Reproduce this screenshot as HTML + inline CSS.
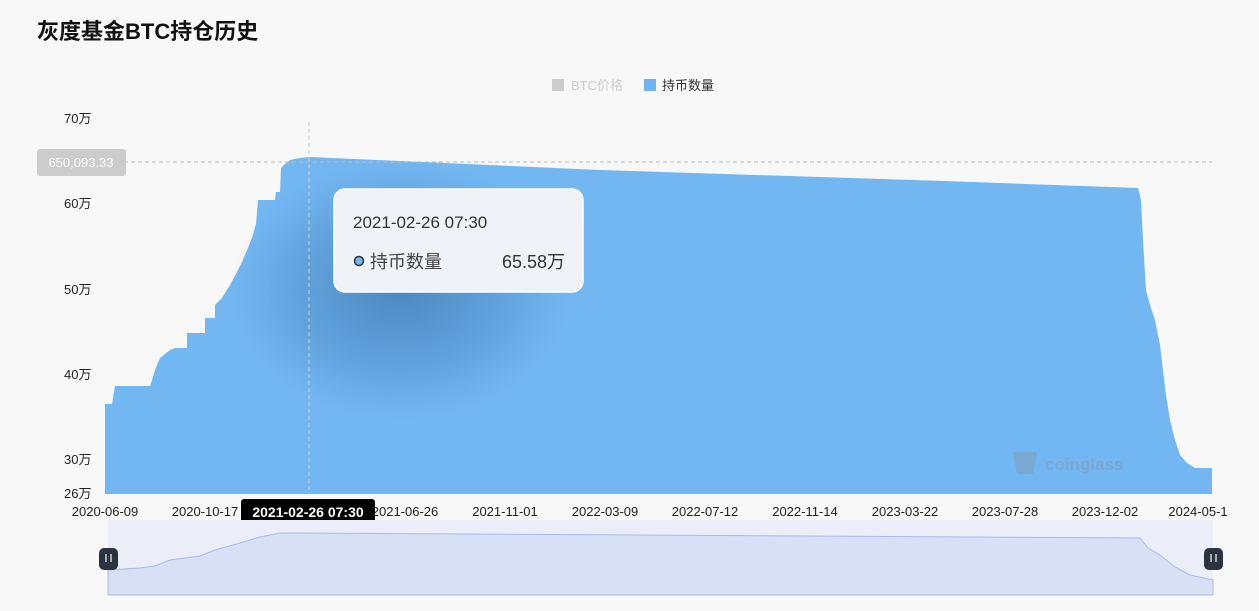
<!DOCTYPE html>
<html><head><meta charset="utf-8"><style>
html,body{margin:0;padding:0;width:1259px;height:611px;background:#f8f8f8;overflow:hidden;font-family:"Liberation Sans","Noto Sans CJK SC",sans-serif;}
</style></head><body>
<svg width="1259" height="611" xmlns="http://www.w3.org/2000/svg" style="position:absolute;left:0;top:0">
<defs>
<radialGradient id="sh" cx="0.5" cy="0.5" r="0.5">
<stop offset="0" stop-color="#1d4f86" stop-opacity="0.45"/>
<stop offset="0.6" stop-color="#1d4f86" stop-opacity="0.2"/>
<stop offset="1" stop-color="#1d4f86" stop-opacity="0"/>
</radialGradient>
</defs>
<text x="37" y="39" font-size="22" font-weight="bold" fill="#111" font-family="Liberation Sans,Noto Sans CJK SC,sans-serif">灰度基金BTC持仓历史</text>
<rect x="552" y="79" width="12" height="12" fill="#ccc"/>
<text x="571" y="90" font-size="13" fill="#ccc" font-family="Liberation Sans,Noto Sans CJK SC,sans-serif">BTC价格</text>
<rect x="644" y="79" width="12" height="12" fill="#6fb3f0"/>
<text x="662" y="90" font-size="13" fill="#333" font-family="Liberation Sans,Noto Sans CJK SC,sans-serif">持币数量</text>
<g font-size="13" fill="#222" font-family="Liberation Sans,Noto Sans CJK SC,sans-serif">
<text x="64" y="123">70万</text>
<text x="64" y="208">60万</text>
<text x="64" y="294">50万</text>
<text x="64" y="379">40万</text>
<text x="64" y="464">30万</text>
<text x="64" y="498">26万</text>
</g>
<polygon fill="#73b7f2" points="105,494 105,404 112,404 115,386 150,386 152,380 155,370 160,358 170,350 175,348 187,348 187,333 205,333 205,318 215,318 215,305 222,298 230,285 237,272 242,262 248,248 252,238 256,224 258,200 275,200 276,192 280,192 281,168 285,164 290,160 300,158 310,157 600,170 945,181 1138,188 1141,200 1143,240 1146,290 1150,305 1155,320 1160,345 1163,370 1166,395 1170,420 1175,440 1180,455 1187,463 1195,468 1212,468 1212,494"/>
<ellipse cx="400" cy="290" rx="170" ry="130" fill="url(#sh)"/>
<line x1="40" y1="162" x2="1212" y2="162" stroke="#bbb" stroke-dasharray="4,3"/>
<line x1="309" y1="122" x2="309" y2="494" stroke="#ccc" stroke-dasharray="4,3"/>
<rect x="37" y="149" width="89" height="27" rx="3" fill="#ccc"/>
<text x="81" y="167" font-size="13" fill="#fff" text-anchor="middle" font-family="Liberation Sans,sans-serif">650,093.33</text>
<g opacity="0.3"><path d="M1013,452 h24 l-4,22 h-16 z" fill="#888"/><text x="1045" y="470" font-size="17" font-weight="bold" fill="#888" font-family="Liberation Sans,sans-serif">coinglass</text></g>
<rect x="334" y="189" width="249" height="103" rx="11" fill="#eff3f7" stroke="#fff" stroke-width="1.5"/>
<text x="353" y="228" font-size="17" fill="#333" font-family="Liberation Sans,sans-serif">2021-02-26 07:30</text>
<circle cx="359" cy="261" r="4.5" fill="#73b7f2" stroke="#333" stroke-width="1.5"/>
<text x="370" y="268" font-size="18" fill="#444" font-family="Liberation Sans,Noto Sans CJK SC,sans-serif">持币数量</text>
<text x="565" y="268" font-size="18" fill="#333" text-anchor="end" font-family="Liberation Sans,Noto Sans CJK SC,sans-serif">65.58万</text>
<g font-size="13" fill="#222" text-anchor="middle" font-family="Liberation Sans,sans-serif">
<text x="105" y="516">2020-06-09</text>
<text x="205" y="516">2020-10-17</text>
<text x="405" y="516">2021-06-26</text>
<text x="505" y="516">2021-11-01</text>
<text x="605" y="516">2022-03-09</text>
<text x="705" y="516">2022-07-12</text>
<text x="805" y="516">2022-11-14</text>
<text x="905" y="516">2023-03-22</text>
<text x="1005" y="516">2023-07-28</text>
<text x="1105" y="516">2023-12-02</text>
<text x="1198" y="516">2024-05-1</text>
</g>
<rect x="241" y="499" width="134" height="27" rx="3" fill="#000"/>
<text x="308" y="517" font-size="14" font-weight="bold" fill="#fff" text-anchor="middle" font-family="Liberation Sans,sans-serif">2021-02-26 07:30</text>
<rect x="108" y="520" width="1105" height="75" fill="#ebeef8"/>
<polygon fill="#d8e0f6" stroke="#a9bbe8" points="108,570 140,568 155,566 170,560 200,556 215,550 240,543 260,537 270,535 280,533 300,533 1140,538 1148,548 1160,555 1175,567 1190,575 1213,580 1213,595 108,595"/>
<rect x="99" y="548" width="19" height="22" rx="5" fill="#2c3340"/>
<rect x="105" y="554" width="2" height="8" fill="#aaa"/><rect x="110" y="554" width="2" height="8" fill="#aaa"/>
<rect x="1204" y="548" width="19" height="22" rx="5" fill="#2c3340"/>
<rect x="1210" y="554" width="2" height="8" fill="#aaa"/><rect x="1215" y="554" width="2" height="8" fill="#aaa"/>
</svg>
</body></html>
